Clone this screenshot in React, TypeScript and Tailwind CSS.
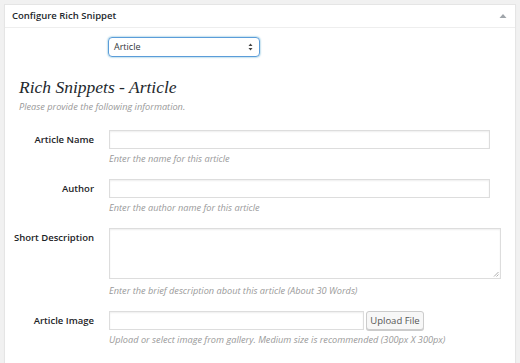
import type { ReactNode } from 'react';

interface FieldRowProps {
  label: string;
  hint: string;
  hintGap?: string;
  children: ReactNode;
}

function FieldRow({ label, hint, hintGap = 'mt-[2px]', children }: FieldRowProps) {
  return (
    <div className="mb-[12px] flex">
      <div className="w-[89px] shrink-0 whitespace-nowrap text-right text-[9.5px] font-semibold leading-[19px] text-[#1d2327]">
        {label}
      </div>
      <div className="ml-[15px] flex-1">
        {children}
        <p className={`${hintGap} text-[9.2px] italic leading-[16px] text-[#999]`}>{hint}</p>
      </div>
    </div>
  );
}

export default function App() {
  return (
    <div className="min-h-[363px] bg-[#f1f1f1] pl-[4px] pr-[4px] pt-[4px] font-['Open_Sans',sans-serif]">
      <div className="h-[400px] w-[512px] border border-[#e5e5e5] bg-white shadow-[0_1px_1px_rgba(0,0,0,0.04)]">
        <div className="flex h-[23px] items-center justify-between border-b border-[#eee] pl-[7px] pr-[8px]">
          <h3 className="text-[9.5px] font-semibold text-[#23282d]">Configure Rich Snippet</h3>
          <svg width="8" height="6" viewBox="0 0 8 6" aria-hidden className="mt-[-1px]">
            <path d="M4 1 L7.5 5 L0.5 5 Z" fill="#a0a5aa" />
          </svg>
        </div>

        <div className="pl-[103px] pt-[9px]">
          <div className="flex h-[20px] w-[152px] items-center justify-between rounded-[4px] border border-[#5b9dd9] pl-[5px] pr-[6px] shadow-[0_0_2px_rgba(30,140,190,0.8)]">
            <span className="text-[9px] text-[#32373c]">Article</span>
            <svg width="5" height="8" viewBox="0 0 5 8" aria-hidden>
              <path d="M2.5 0.5 L4.5 3 L0.5 3 Z M2.5 7.5 L4.5 5 L0.5 5 Z" fill="#444" />
            </svg>
          </div>
        </div>

        <div className="pl-[14px] pt-[18px]">
          <h2 className="font-['Liberation_Serif',serif] text-[17.5px] italic leading-[24px] text-[#23282d]">
            Rich Snippets - Article
          </h2>
          <p className="text-[9.2px] italic leading-[16px] text-[#999]">
            Please provide the following information.
          </p>
        </div>

        <div className="pt-[15px]">
          <FieldRow label="Article Name" hint="Enter the name for this article">
            <div className="h-[19px] w-[381px] border border-[#ddd] shadow-[inset_0_1px_2px_rgba(0,0,0,0.07)]" />
          </FieldRow>
          <FieldRow label="Author" hint="Enter the author name for this article">
            <div className="h-[19px] w-[381px] border border-[#ddd] shadow-[inset_0_1px_2px_rgba(0,0,0,0.07)]" />
          </FieldRow>
          <FieldRow
            label="Short Description"
            hint="Enter the brief description about this article (About 30 Words)"
            hintGap="mt-[4px]"
          >
            <div className="relative h-[51px] w-[392px] border border-[#ddd] shadow-[inset_0_1px_2px_rgba(0,0,0,0.07)]">
              <svg width="6" height="6" viewBox="0 0 6 6" aria-hidden className="absolute bottom-[1px] right-[1px]">
                <path d="M5.5 1 L1 5.5 M5.5 3.5 L3.5 5.5" stroke="#999" strokeWidth="0.8" />
              </svg>
            </div>
          </FieldRow>
          <FieldRow
            label="Article Image"
            hint="Upload or select image from gallery. Medium size is recommended (300px X 300px)"
          >
            <div className="flex items-center gap-[2px]">
              <div className="h-[19px] w-[255px] border border-[#ddd] shadow-[inset_0_1px_2px_rgba(0,0,0,0.07)]" />
              <button className="h-[19px] w-[58px] rounded-[3px] border border-[#ccc] bg-[#f7f7f7] text-[9.5px] leading-none text-[#555] shadow-[0_1px_0_#ccc]">
                Upload File
              </button>
            </div>
          </FieldRow>
        </div>
      </div>
    </div>
  );
}
